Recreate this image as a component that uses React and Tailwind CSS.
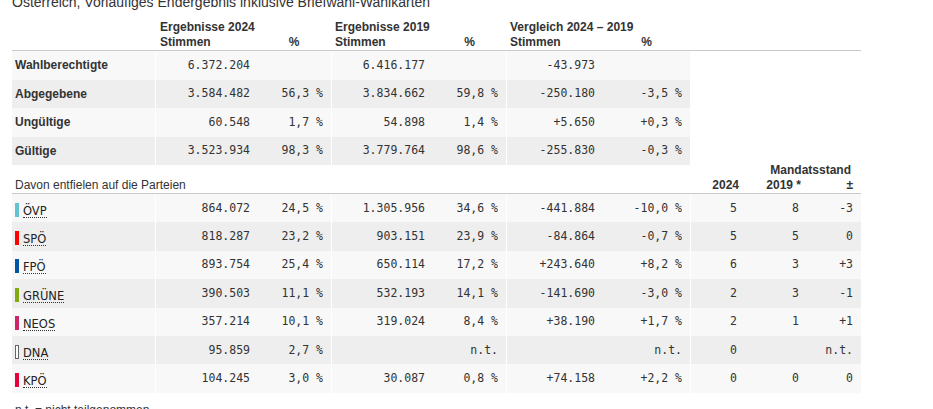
import React from "react";

const mono = "font-['DejaVu_Sans_Mono',monospace] text-[11.5px] text-[#333]";

const top = [
  ["Wahlberechtigte", "6.372.204", "", "6.416.177", "", "-43.973", ""],
  ["Abgegebene", "3.584.482", "56,3 %", "3.834.662", "59,8 %", "-250.180", "-3,5 %"],
  ["Ungültige", "60.548", "1,7 %", "54.898", "1,4 %", "+5.650", "+0,3 %"],
  ["Gültige", "3.523.934", "98,3 %", "3.779.764", "98,6 %", "-255.830", "-0,3 %"],
];

const parties = [
  ["ÖVP", "bg-[#63c3d0]", "864.072", "24,5 %", "1.305.956", "34,6 %", "-441.884", "-10,0 %", "5", "8", "-3"],
  ["SPÖ", "bg-[#ff0000]", "818.287", "23,2 %", "903.151", "23,9 %", "-84.864", "-0,7 %", "5", "5", "0"],
  ["FPÖ", "bg-[#0056a2]", "893.754", "25,4 %", "650.114", "17,2 %", "+243.640", "+8,2 %", "6", "3", "+3"],
  ["GRÜNE", "bg-[#80aa10]", "390.503", "11,1 %", "532.193", "14,1 %", "-141.690", "-3,0 %", "2", "3", "-1"],
  ["NEOS", "bg-[#cc2569]", "357.214", "10,1 %", "319.024", "8,4 %", "+38.190", "+1,7 %", "2", "1", "+1"],
  ["DNA", "bg-white border border-[#666]", "95.859", "2,7 %", "", "n.t.", "", "n.t.", "0", "", "n.t."],
  ["KPÖ", "bg-[#e4003a]", "104.245", "3,0 %", "30.087", "0,8 %", "+74.158", "+2,2 %", "0", "0", "0"],
];

function Num({ w, sep, children }) {
  return (
    <div
      className={
        "h-full flex items-center justify-end pr-2 " +
        mono +
        " " +
        w +
        (sep ? " border-l border-white" : "")
      }
    >
      {children}
    </div>
  );
}

function Cells({ v, bg }) {
  return (
    <>
      <Num w={"w-[103px] " + bg} sep>{v[0]}</Num>
      <Num w={"w-[73px] " + bg}>{v[1]}</Num>
      <Num w={"w-[102px] " + bg} sep>{v[2]}</Num>
      <Num w={"w-[73px] " + bg}>{v[3]}</Num>
      <Num w={"w-[97px] " + bg} sep>{v[4]}</Num>
      <Num w={"w-[87px] " + bg}>{v[5]}</Num>
    </>
  );
}

export default function App() {
  return (
    <div className="bg-white min-h-[409px] pl-[12px] overflow-hidden font-['Liberation_Sans',Arial,sans-serif] text-[#333]">
      <div className="-mt-[7px] text-[14px] leading-[18px] text-[#333] whitespace-nowrap">
        Österreich, Vorläufiges Endergebnis inklusive Briefwahl-Wahlkarten
      </div>

      {/* header of first table */}
      <div className="mt-[9px] w-[849px] border-b border-[#cacaca] font-bold text-[12px] leading-[15px]">
        <div className="flex">
          <div className="w-[143px]"></div>
          <div className="w-[176px] pl-[5px]">Ergebnisse 2024</div>
          <div className="w-[175px] pl-[4px]">Ergebnisse 2019</div>
          <div className="w-[184px] pl-[4px]">Vergleich 2024 – 2019</div>
        </div>
        <div className="flex">
          <div className="w-[143px]"></div>
          <div className="w-[103px] pl-[5px]">Stimmen</div>
          <div className="w-[73px] text-center pr-[1px]">%</div>
          <div className="w-[102px] pl-[4px]">Stimmen</div>
          <div className="w-[73px] text-center">%</div>
          <div className="w-[97px] pl-[4px]">Stimmen</div>
          <div className="w-[87px] text-center">%</div>
        </div>
      </div>

      {top.map((r, i) => {
        const bg = i % 2 === 0 ? "bg-[#f8f8f8]" : "bg-[#eeeeee]";
        return (
          <div key={r[0]} className="flex h-[28.5px]">
            <div className={"w-[143px] h-full flex items-center pl-[3px] font-bold text-[12px] " + bg}>
              {r[0]}
            </div>
            <Cells v={r.slice(1)} bg={bg} />
          </div>
        );
      })}

      {/* party header */}
      <div className="w-[849px] h-[29px] border-b border-[#cacaca] flex items-end text-[12px] leading-[15px]">
        <div className="w-[680px] pl-[3px]">Davon entfielen auf die Parteien</div>
        <div className="w-[169px] flex flex-col font-bold">
          <div className="text-right pr-[10px]">Mandatsstand</div>
          <div className="flex">
            <div className="w-[56px] text-right pr-[9px]">2024</div>
            <div className="w-[62px] text-right pr-[9px]">2019 *</div>
            <div className="w-[51px] text-right pr-[8px]">±</div>
          </div>
        </div>
      </div>

      {parties.map((p, i) => {
        const bg = i % 2 === 0 ? "bg-[#f8f8f8]" : "bg-[#eeeeee]";
        return (
          <div key={p[0]} className="flex h-[28.4px]">
            <div className={"w-[143px] h-full flex items-center pl-[3px] " + bg}>
              <span className={"inline-block w-[4px] h-[14px] mr-[4px] mt-[3px] " + p[1]}></span>
              <span className="inline-block mt-[6px] font-['DejaVu_Sans',Verdana,sans-serif] text-[11.5px] leading-[12px] text-[#222] border-b border-dotted border-[#333]">
                {p[0]}
              </span>
            </div>
            <Cells v={p.slice(2, 8)} bg={bg} />
            <Num w={"w-[55px] " + bg} sep>{p[8]}</Num>
            <Num w={"w-[62px] " + bg}>{p[9]}</Num>
            <Num w={"w-[54px] " + bg}>{p[10]}</Num>
          </div>
        );
      })}

      <div className="mt-[10px] pl-[3px] text-[12px] leading-[14px]">n.t. = nicht teilgenommen</div>
    </div>
  );
}
